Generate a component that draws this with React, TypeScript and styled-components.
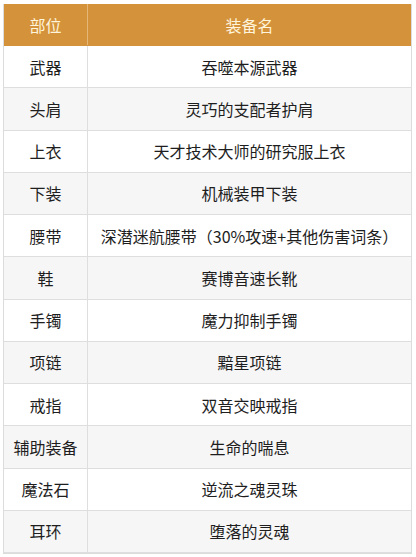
import styled, { createGlobalStyle } from 'styled-components';

const GlobalStyle = createGlobalStyle`
  html, body {
    margin: 0;
    padding: 0;
    background: #ffffff;
  }
`;

const Page = styled.div`
  padding: 4px 0 0 3px;
  font-family: 'Noto Sans CJK SC', 'Noto Sans', sans-serif;
`;

const Table = styled.div`
  width: 409px;
  border: 1px solid #dcdcdc;
  border-top: none;
  box-sizing: border-box;
`;

const Row = styled.div<{ $head?: boolean; $shade?: boolean }>`
  display: grid;
  grid-template-columns: 84px 1fr;
  height: ${(p) => (p.$head ? '42px' : '42.25px')};
  box-sizing: border-box;
  border-bottom: 1px solid ${(p) => (p.$head ? '#d4923a' : '#dedede')};
  background: ${(p) => (p.$head ? '#d4923a' : p.$shade ? '#f6f6f6' : '#ffffff')};
  color: ${(p) => (p.$head ? '#fff4dc' : '#1e1e1e')};
`;

const Cell = styled.div<{ $first?: boolean; $head?: boolean }>`
  display: flex;
  align-items: center;
  justify-content: center;
  font-size: 16px;
  border-right: ${(p) => (p.$first ? `1px solid ${p.$head ? '#e6b877' : '#dedede'}` : 'none')};
  white-space: nowrap;
`;

const rows: [string, string][] = [
  ['武器', '吞噬本源武器'],
  ['头肩', '灵巧的支配者护肩'],
  ['上衣', '天才技术大师的研究服上衣'],
  ['下装', '机械装甲下装'],
  ['腰带', '深潜迷航腰带（30%攻速+其他伤害词条）'],
  ['鞋', '赛博音速长靴'],
  ['手镯', '魔力抑制手镯'],
  ['项链', '黯星项链'],
  ['戒指', '双音交映戒指'],
  ['辅助装备', '生命的喘息'],
  ['魔法石', '逆流之魂灵珠'],
  ['耳环', '堕落的灵魂'],
];

export default function App() {
  return (
    <>
      <GlobalStyle />
      <Page>
        <Table>
          <Row $head>
            <Cell $first $head>部位</Cell>
            <Cell $head>装备名</Cell>
          </Row>
          {rows.map(([slot, name], i) => (
            <Row key={slot} $shade={i % 2 === 1}>
              <Cell $first>{slot}</Cell>
              <Cell>{name}</Cell>
            </Row>
          ))}
        </Table>
      </Page>
    </>
  );
}
